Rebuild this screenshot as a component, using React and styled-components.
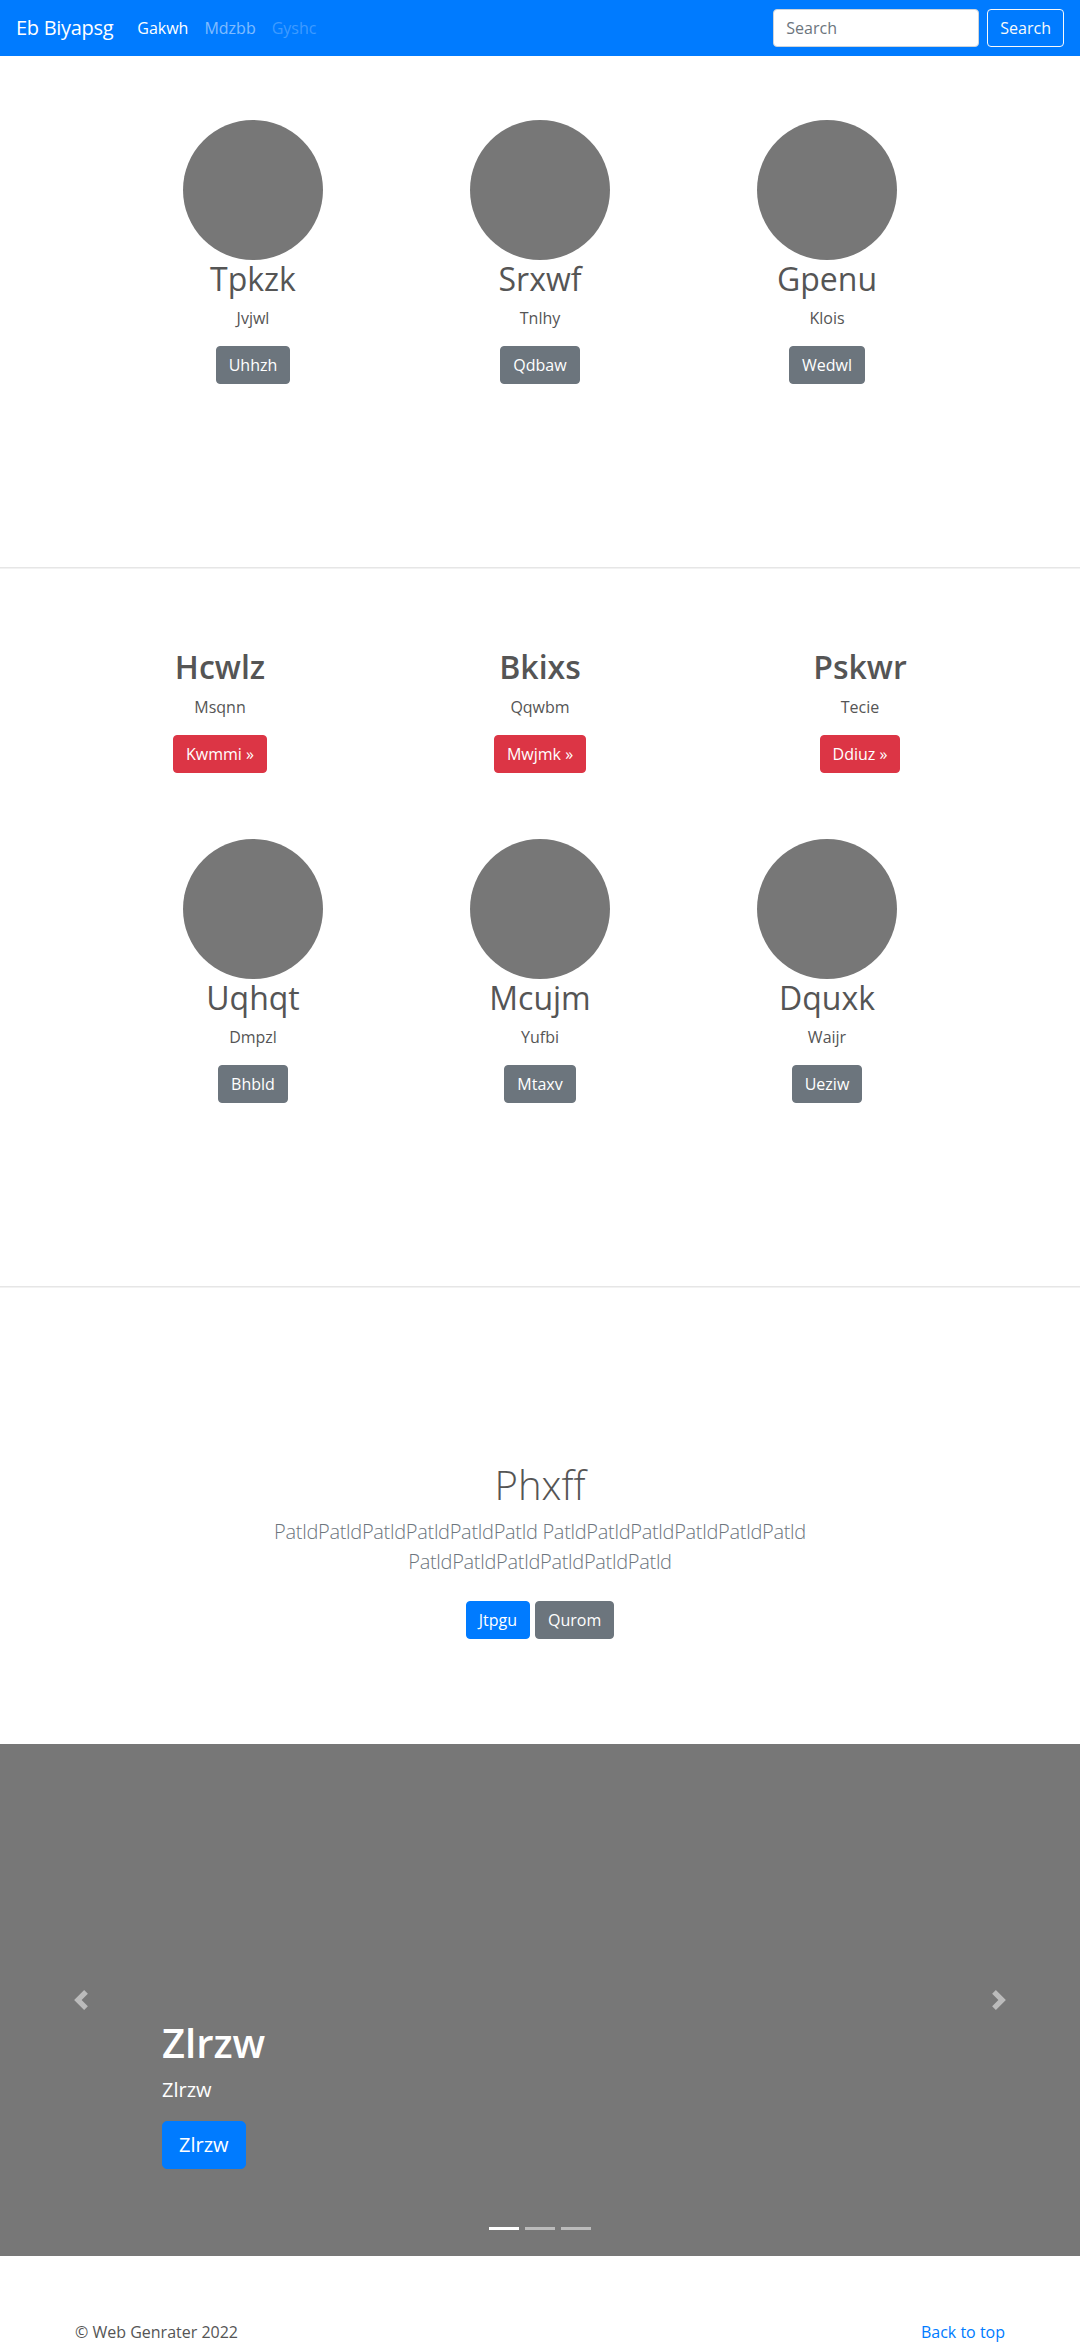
import React from "react";
import styled, { createGlobalStyle } from "styled-components";

const GlobalStyle = createGlobalStyle`
  *, *::before, *::after { box-sizing: border-box; }
  html, body { margin: 0; padding: 0; }
  body {
    font-family: "Open Sans", "Liberation Sans", sans-serif;
    font-size: 16px;
    line-height: 1.5;
    color: #555;
    background: #fff;
  }
`;

/* ---------- Navbar ---------- */
const Navbar = styled.nav`
  height: 56px;
  background: #007bff;
  display: flex;
  align-items: center;
  padding: 8px 16px;
`;
const Brand = styled.a`
  font-size: 20px;
  line-height: 30px;
  padding: 5px 0;
  margin-right: 16px;
  color: #fff;
  text-decoration: none;
  white-space: nowrap;
  letter-spacing: -0.3px;
`;
const NavList = styled.ul`
  display: flex;
  flex: 1;
  list-style: none;
  margin: 0;
  padding: 0;
`;
const NavLink = styled.a`
  display: block;
  padding: 8px;
  font-size: 16px;
  line-height: 24px;
  text-decoration: none;
  color: ${(p) =>
    p.$state === "active"
      ? "#fff"
      : p.$state === "disabled"
      ? "rgba(255,255,255,.25)"
      : "rgba(255,255,255,.5)"};
`;
const SearchForm = styled.form`
  display: flex;
  align-items: center;
`;
const SearchInput = styled.input`
  width: 206px;
  height: 38px;
  margin-right: 8px;
  padding: 6px 12px;
  font-family: inherit;
  font-size: 16px;
  color: #495057;
  background: #fff;
  border: 1px solid #ced4da;
  border-radius: 4px;
  &::placeholder { color: #6c757d; }
`;
const OutlineButton = styled.button`
  height: 38px;
  padding: 6px 12px;
  font-family: inherit;
  font-size: 16px;
  line-height: 24px;
  color: #f8f9fa;
  background: transparent;
  border: 1px solid #f8f9fa;
  border-radius: 4px;
`;

/* ---------- Common ---------- */
const Divider = styled.hr`
  margin: 0;
  height: 0;
  border: 0;
  border-top: 1px solid #e6e6e6;
  border-bottom: 1px solid #f2f2f2;
`;

const Button = styled.a`
  display: inline-block;
  padding: ${(p) => (p.$lg ? "8px 16px" : "6px 12px")};
  font-size: ${(p) => (p.$lg ? "20px" : "16px")};
  line-height: ${(p) => (p.$lg ? "30px" : "24px")};
  border-radius: ${(p) => (p.$lg ? "5px" : "4px")};
  color: #fff;
  text-decoration: none;
  white-space: nowrap;
  background: ${(p) => p.$color};
  border: 1px solid ${(p) => p.$color};
`;

const ButtonRow = styled.p`
  display: flex;
  justify-content: ${(p) => (p.$left ? "flex-start" : "center")};
  gap: 5px;
  margin: 0 0 ${(p) => (p.$last ? "0" : "16px")};
  padding: ${(p) => (p.$spaced ? "8px 0" : "0")};
`;

/* ---------- Marketing circles ---------- */
const Section = styled.section`
  padding: ${(p) => p.$pad};
`;
const CircleGrid = styled.div`
  display: grid;
  grid-template-columns: repeat(3, 287px);
  justify-content: center;
  margin-top: ${(p) => p.$mt || "0"};
`;
const FeatureGrid = styled.div`
  display: grid;
  grid-template-columns: repeat(3, 320px);
  justify-content: center;
`;
const Column = styled.div`
  display: flex;
  flex-direction: column;
  align-items: center;
  text-align: center;
`;
const Avatar = styled.div`
  width: 140px;
  height: 140px;
  border-radius: 50%;
  background: #777;
`;
const ColTitle = styled.h2`
  margin: 0 0 8px;
  font-size: 32px;
  line-height: 1.2;
  font-weight: ${(p) => (p.$bold ? 600 : 400)};
  color: #555;
`;
const ColText = styled.p`
  margin: 0 0 16px;
  font-size: 16px;
  color: #555;
`;

/* ---------- Hero ---------- */
const Hero = styled.section`
  padding: 173px 0 97px;
  text-align: center;
`;
const HeroInner = styled.div`
  max-width: 640px;
  margin: 0 auto;
  padding: 0 15px;
`;
const HeroTitle = styled.h1`
  margin: 0 0 8px;
  font-size: 40px;
  line-height: 1.2;
  font-weight: 300;
  color: #555;
`;
const Lead = styled.p`
  margin: 0 0 16px;
  font-size: 20px;
  line-height: 30px;
  font-weight: 300;
  color: #6c757d;
  letter-spacing: -0.3px;
`;

/* ---------- Carousel ---------- */
const Carousel = styled.div`
  position: relative;
  height: 512px;
  background: #777;
  display: flex;
  align-items: flex-end;
  padding: 0 15% 51px;
`;
const Caption = styled.div`
  position: relative;
  z-index: 10;
  padding: 20px 0;
  color: #fff;
  text-align: left;
`;
const CaptionTitle = styled.h1`
  margin: 0 0 8px;
  font-size: 40px;
  line-height: 1.2;
  font-weight: 600;
`;
const CaptionText = styled.p`
  margin: 0 0 16px;
  font-size: 20px;
  line-height: 30px;
`;
const Control = styled.a`
  position: absolute;
  top: 0;
  bottom: 0;
  ${(p) => (p.$side === "prev" ? "left: 0;" : "right: 0;")}
  width: 15%;
  display: flex;
  align-items: center;
  justify-content: center;
  opacity: 0.5;
`;
const Indicators = styled.ol`
  position: absolute;
  left: 15%;
  right: 15%;
  bottom: 0;
  z-index: 15;
  display: flex;
  justify-content: center;
  list-style: none;
  padding: 0;
  margin: 0 0 16px;
`;
const Indicator = styled.li`
  box-sizing: content-box;
  width: 30px;
  height: 3px;
  margin: 0 3px;
  background: #fff;
  background-clip: padding-box;
  border-top: 10px solid transparent;
  border-bottom: 10px solid transparent;
  opacity: ${(p) => (p.$active ? 1 : 0.5)};
`;

/* ---------- Footer ---------- */
const Footer = styled.footer`
  max-width: 960px;
  margin: 64px auto 0;
  padding: 0 15px;
  display: flex;
  justify-content: space-between;
`;
const FooterText = styled.p`
  margin: 0 0 16px;
  color: #555;
`;
const FooterLink = styled.a`
  color: #007bff;
  text-decoration: none;
`;

const ChevronLeft = () => (
  <svg width="20" height="20" viewBox="0 0 8 8" fill="#fff">
    <path d="M5.25 0l-4 4 4 4 1.5-1.5L4.25 4l2.5-2.5L5.25 0z" />
  </svg>
);
const ChevronRight = () => (
  <svg width="20" height="20" viewBox="0 0 8 8" fill="#fff">
    <path d="M2.75 0l-1.5 1.5L3.75 4l-2.5 2.5L2.75 8l4-4-4-4z" />
  </svg>
);

const circles1 = [
  { t: "Tpkzk", s: "Jvjwl", b: "Uhhzh" },
  { t: "Srxwf", s: "Tnlhy", b: "Qdbaw" },
  { t: "Gpenu", s: "Klois", b: "Wedwl" },
];
const features = [
  { t: "Hcwlz", s: "Msqnn", b: "Kwmmi" },
  { t: "Bkixs", s: "Qqwbm", b: "Mwjmk" },
  { t: "Pskwr", s: "Tecie", b: "Ddiuz" },
];
const circles2 = [
  { t: "Uqhqt", s: "Dmpzl", b: "Bhbld" },
  { t: "Mcujm", s: "Yufbi", b: "Mtaxv" },
  { t: "Dquxk", s: "Waijr", b: "Ueziw" },
];

const CircleCol = ({ t, s, b }) => (
  <Column>
    <Avatar />
    <ColTitle>{t}</ColTitle>
    <ColText>{s}</ColText>
    <ButtonRow>
      <Button $color="#6c757d" href="#">{b}</Button>
    </ButtonRow>
  </Column>
);

export default function App() {
  return (
    <>
      <GlobalStyle />
      <Navbar>
        <Brand href="#">Eb Biyapsg</Brand>
        <NavList>
          <li><NavLink $state="active" href="#">Gakwh</NavLink></li>
          <li><NavLink href="#">Mdzbb</NavLink></li>
          <li><NavLink $state="disabled" href="#">Gyshc</NavLink></li>
        </NavList>
        <SearchForm onSubmit={(e) => e.preventDefault()}>
          <SearchInput type="text" placeholder="Search" />
          <OutlineButton type="submit">Search</OutlineButton>
        </SearchForm>
      </Navbar>

      <Section $pad="64px 0 167px">
        <CircleGrid>
          {circles1.map((c) => <CircleCol key={c.t} {...c} />)}
        </CircleGrid>
      </Section>

      <Divider />

      <Section $pad="79px 0 167px">
        <FeatureGrid>
          {features.map((f) => (
            <Column key={f.t}>
              <ColTitle $bold>{f.t}</ColTitle>
              <ColText>{f.s}</ColText>
              <ButtonRow>
                <Button $color="#dc3545" href="#">{f.b} &raquo;</Button>
              </ButtonRow>
            </Column>
          ))}
        </FeatureGrid>
        <CircleGrid $mt="50px">
          {circles2.map((c) => <CircleCol key={c.t} {...c} />)}
        </CircleGrid>
      </Section>

      <Divider />

      <Hero>
        <HeroInner>
          <HeroTitle>Phxff</HeroTitle>
          <Lead>
            PatldPatldPatldPatldPatldPatld PatldPatldPatldPatldPatldPatld PatldPatldPatldPatldPatldPatld
          </Lead>
          <ButtonRow $spaced $last>
            <Button $color="#007bff" href="#">Jtpgu</Button>
            <Button $color="#6c757d" href="#">Qurom</Button>
          </ButtonRow>
        </HeroInner>
      </Hero>

      <Carousel>
        <Control $side="prev" href="#"><ChevronLeft /></Control>
        <Caption>
          <CaptionTitle>Zlrzw</CaptionTitle>
          <CaptionText>Zlrzw</CaptionText>
          <ButtonRow $left>
            <Button $lg $color="#007bff" href="#">Zlrzw</Button>
          </ButtonRow>
        </Caption>
        <Control $side="next" href="#"><ChevronRight /></Control>
        <Indicators>
          <Indicator $active />
          <Indicator />
          <Indicator />
        </Indicators>
      </Carousel>

      <Footer>
        <FooterText>© Web Genrater 2022</FooterText>
        <FooterText>
          <FooterLink href="#">Back to top</FooterLink>
        </FooterText>
      </Footer>
    </>
  );
}
